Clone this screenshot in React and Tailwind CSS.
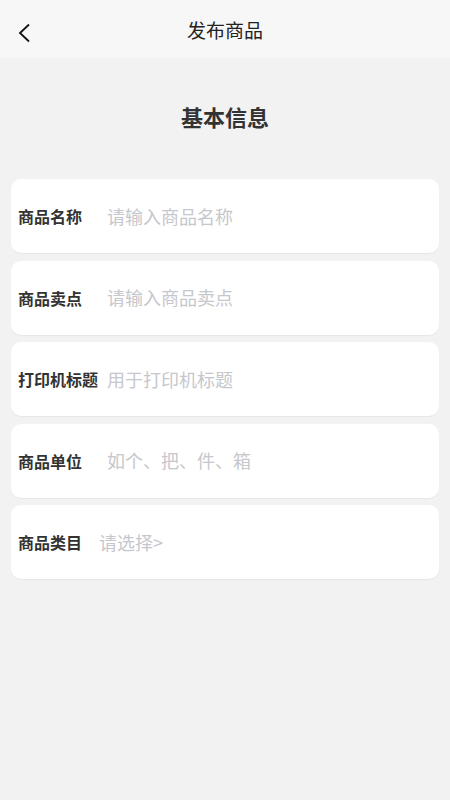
import React from 'react';

const fields = [
  { label: '商品名称', placeholder: '请输入商品名称' },
  { label: '商品卖点', placeholder: '请输入商品卖点' },
  { label: '打印机标题', placeholder: '用于打印机标题' },
  { label: '商品单位', placeholder: '如个、把、件、箱' },
];

const App = () => {
  return (
    <div className="min-h-screen bg-[#f2f2f2] font-['Noto_Sans_CJK_SC',sans-serif] text-[#333]">
      {/* HEADER */}
      <header className="h-[58px] bg-[#f7f7f7] flex items-center justify-center relative">
        <button className="absolute left-[16px] top-[22px] w-[16px] h-[22px] flex items-center justify-center">
          <svg width="14" height="20" viewBox="0 0 14 20" fill="none" stroke="#111" strokeWidth="1.8">
            <path d="M12 1.5 L3 10 L12 18.5" />
          </svg>
        </button>
        <h1 className="text-[19px] text-[#222] leading-none">发布商品</h1>
      </header>

      <h2 className="text-[22px] font-bold text-center text-[#333] mt-[44px] mb-[49px] leading-[28px]">基本信息</h2>

      <div className="flex flex-col gap-[7.5px] px-[11px]">
        {fields.map((f, i) => (
          <div key={i} className="h-[74px] bg-white rounded-[10px] shadow-[0_1px_1px_rgba(0,0,0,0.05)] flex items-center pl-[7px]">
            <span className="w-[89px] shrink-0 text-[16px] font-bold text-[#333]">{f.label}</span>
            <input
              className="flex-1 text-[18px] outline-none bg-transparent placeholder:text-[#c6c7cc]"
              placeholder={f.placeholder}
            />
          </div>
        ))}
        <div className="h-[74px] bg-white rounded-[10px] shadow-[0_1px_1px_rgba(0,0,0,0.05)] flex items-center pl-[7px]">
          <span className="text-[16px] font-bold text-[#333]">商品类目</span>
          <span className="ml-[17px] text-[18px] text-[#c6c7cc]">请选择&gt;</span>
        </div>
      </div>
    </div>
  );
};

export default App;
